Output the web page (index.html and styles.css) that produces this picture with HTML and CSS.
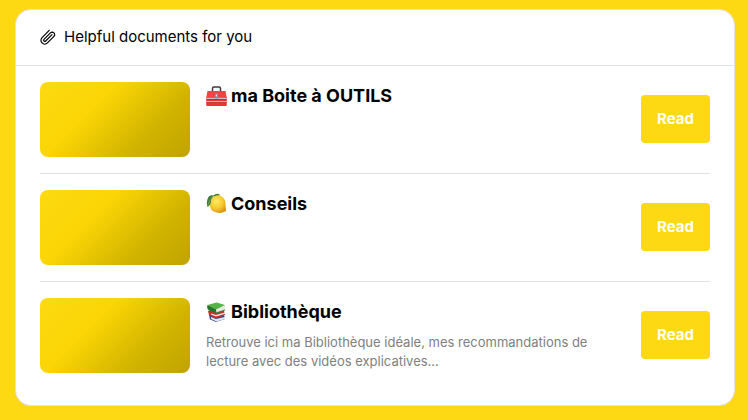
FILE: index.html
```html
<!DOCTYPE html>
<html lang="fr">
<head>
    <meta charset="UTF-8">
    <meta name="viewport" content="width=device-width, initial-scale=1.0">
    <title>Helpful documents for you</title>
    <link rel="stylesheet" href="styles.css">
</head>
<body>
    <section class="card">
        <header class="card-header">
            <svg class="clip" viewBox="0 0 16 16" aria-hidden="true">
                <path transform="translate(8 8) rotate(-45)" d="M4.500 1.200H-4.500A1.200 1.200 0 0 1-4.500-1.200H4.600A2.500 2.500 0 0 1 4.600 3.800H-4.600A3.800 3.800 0 0 1-4.600-3.800H5.500"/>
            </svg>
            <span>Helpful documents for you</span>
        </header>

        <ul class="documents">
            <li class="document">
                <div class="thumb"></div>
                <div class="info">
                    <h2 class="title">
                        <svg class="emoji" viewBox="0 0 22 22" aria-hidden="true">
                            <path d="M6.500 7V3.500q0-1.500 1.500-1.500h5q1.500 0 1.500 1.500V7" fill="none" stroke="#4b3436" stroke-width="1.500"/>
                            <path d="M1.500 6h18l1.300 7H.2z" fill="#f0443c"/>
                            <path d="M.2 12h20.600v8q0 1-1 1H1.200q-1 0-1-1z" fill="#f0332d"/>
                            <path d="M.2 12.800h20.600v1.200H.2zM.2 16h20.600v1.200H.2z" fill="#c5c1c8"/>
                            <path d="M.2 14h20.600v.6H.2zM.2 17.200h20.600v.6H.2z" fill="#9d2424"/>
                            <rect x="9" y="8.500" width="3" height="5" rx=".6" fill="#8e8993"/>
                            <rect x="9.800" y="9.500" width="1.300" height="2" fill="#e0dce2"/>
                        </svg>
                        ma Boite à OUTILS
                    </h2>
                </div>
                <button class="read-btn" type="button">Read</button>
            </li>

            <li class="document">
                <div class="thumb"></div>
                <div class="info">
                    <h2 class="title">
                        <svg class="emoji" viewBox="0 0 22 22" aria-hidden="true">
                            <defs>
                                <radialGradient id="lemon" cx=".4" cy=".35" r=".7">
                                    <stop offset="0" stop-color="#ffe96a"/>
                                    <stop offset=".55" stop-color="#f7cb2d"/>
                                    <stop offset="1" stop-color="#d99412"/>
                                </radialGradient>
                            </defs>
                            <path d="M7 3q4-4 7-1l-4 3z" fill="#3f7c2e"/>
                            <path d="M6 5Q10 1 15 3q5 3 4.500 9 0 3 .7 5-.2 2-2.500 2-3.200 1.500-7.200.5-6-1.500-6.500-6.500Q3.500 8 6 5z" fill="url(#lemon)"/>
                            <path d="M8 2.500Q3 1 1.500 6q-1.500 4 0 8 3.500-2 3.500-6.500 1-3 3-5z" fill="#3d7a32"/>
                            <path d="M7 3Q3.500 6 2 12" fill="none" stroke="#87b865" stroke-width=".7"/>
                        </svg>
                        Conseils
                    </h2>
                </div>
                <button class="read-btn" type="button">Read</button>
            </li>

            <li class="document">
                <div class="thumb"></div>
                <div class="info">
                    <h2 class="title">
                        <svg class="emoji" viewBox="0 0 22 22" aria-hidden="true">
                            <path d="m3 14 2-1 13 1 1 4-9 3-6-2.500z" fill="#2c4f91"/>
                            <path d="m5 16 5 2 9-2v2l-8.500 2.500L5 18z" fill="#e7e5e7"/>
                            <path d="m2 10 4-1 12 1 1 4-9 3.500L3 14z" fill="#c92d2c"/>
                            <path d="m5 12.500 5 1.500 9-2.500v1.200l-9 2.800-5-2z" fill="#f1eeee"/>
                            <path d="m1 5 1-1 8 4v4L3 9.500Q1 8 1 5z" fill="#23752f"/>
                            <path d="m10 8 9-4v4.500L10.500 12z" fill="#e6e8e2"/>
                            <path d="m1.500 4 9-2.500L19 4l-9 4.500z" fill="#55b346"/>
                            <path d="m10 11.500 9-3v1L10 13z" fill="#2d8438"/>
                        </svg>
                        Bibliothèque
                    </h2>
                    <p class="description">Retrouve ici ma Bibliothèque idéale, mes recommandations de lecture avec des vidéos explicatives...</p>
                </div>
                <button class="read-btn" type="button">Read</button>
            </li>
        </ul>
    </section>
</body>
</html>
```

FILE: styles.css
```css
* {
    margin: 0;
    padding: 0;
    box-sizing: border-box;
}

body {
    font-family: Inter, "Liberation Sans", sans-serif;
    background: #fcd913;
    color: #000;
    padding: 9px 13px 14px 15px;
}

.card {
    background: #fff;
    border: 1px solid #e2e2e2;
    border-radius: 16px;
}

.card-header {
    display: flex;
    align-items: center;
    gap: 8px;
    padding: 16px 24px 17px;
    border-bottom: 1px solid #e2e2e2;
    font-size: 15px;
    line-height: 22px;
}

.clip {
    width: 16px;
    height: 16px;
    fill: none;
    stroke: #000;
    stroke-width: 1.2;
    stroke-linecap: round;
    stroke-linejoin: round;
}

.documents {
    list-style: none;
    padding: 0 24px 16px;
}

.document {
    display: flex;
    align-items: center;
    gap: 16px;
    padding: 16px 0;
}

.document + .document {
    border-top: 1px solid #e2e2e2;
}

.thumb {
    flex: none;
    width: 150px;
    height: 75px;
    border-radius: 8px;
    background: linear-gradient(135deg, #fcd913 0%, #fbd504 35%, #d0b300 72%, #c0a400 100%);
}

.info {
    flex: 1;
    align-self: flex-start;
}

.title {
    display: flex;
    align-items: center;
    gap: 3px;
    font-size: 18px;
    font-weight: 700;
    line-height: 27px;
}

.emoji {
    width: 22px;
    height: 22px;
}

.description {
    margin-top: 8px;
    color: #808080;
    font-size: 13px;
    line-height: 19px;
}

.read-btn {
    height: 48px;
    margin-bottom: 1px;
    padding: 0 16px 2px;
    border: none;
    border-radius: 4px;
    background: #fcd913;
    color: #fff;
    font-family: inherit;
    font-size: 15px;
    font-weight: 700;
    cursor: pointer;
}
```
